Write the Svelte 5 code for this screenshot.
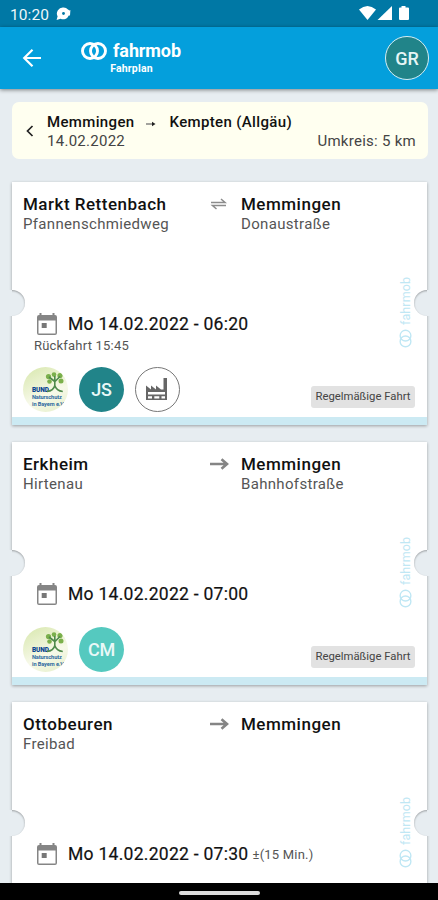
<script lang="ts">
  type Partner = { kind: 'bund' | 'person' | 'factory'; initials?: string; color?: string };
  type Ride = {
    from: string; fromStreet: string; to: string; toStreet?: string; both?: boolean;
    time: string; flex?: string; back?: string; partners?: Partner[];
  };

  const rides: Ride[] = [
    {
      from: 'Markt Rettenbach', fromStreet: 'Pfannenschmiedweg', to: 'Memmingen', toStreet: 'Donaustraße', both: true,
      time: 'Mo 14.02.2022 - 06:20', back: 'Rückfahrt 15:45',
      partners: [{ kind: 'bund' }, { kind: 'person', initials: 'JS', color: '#218489' }, { kind: 'factory' }],
    },
    {
      from: 'Erkheim', fromStreet: 'Hirtenau', to: 'Memmingen', toStreet: 'Bahnhofstraße',
      time: 'Mo 14.02.2022 - 07:00',
      partners: [{ kind: 'bund' }, { kind: 'person', initials: 'CM', color: '#55c9bf' }],
    },
    {
      from: 'Ottobeuren', fromStreet: 'Freibad', to: 'Memmingen',
      time: 'Mo 14.02.2022 - 07:30', flex: '±(15 Min.)',
    },
  ];
</script>

{#snippet rings(width: number)}
  <svg class="rings" viewBox="0 0 26 18" fill="none" stroke="currentColor" stroke-width={width}>
    <circle cx="9" cy="9" r="7.5" />
    <circle cx="17" cy="9" r="7.5" />
  </svg>
{/snippet}

<div class="phone">
  <div class="status">
    <span class="clock">10:20</span>
    <svg class="notif" width="16" height="14" viewBox="0 0 16 14">
      <path fill="#fff" d="M7.500.5a6 6 0 0 1 4.500 1.900l1.500 1.200.9-.6-.4 5.500-1.200.1A6 6 0 0 1 4.600 11.700L.6 13l1-3.700A6 6 0 0 1 7.500.5z" />
      <circle cx="7.500" cy="6.500" r="1.400" fill="#0078a5" />
    </svg>
    <svg class="signals" width="52" height="17" viewBox="0 0 52 17" fill="#fff">
      <path d="M0 4.500Q8.500-2.500 17 4.500L8.500 15z" />
      <path d="M33 1v14H18.500z" />
      <path d="M42.500 1h4v1.500H49a1 1 0 0 1 1 1V14a1 1 0 0 1-1 1h-8a1 1 0 0 1-1-1V3.500a1 1 0 0 1 1-1h1.500z" />
    </svg>
  </div>

  <header class="bar">
    <svg class="back" width="20" height="20" viewBox="0 0 20 20" fill="none" stroke="#fff" stroke-width="2.200">
      <path d="M19 10H3M10.500 1.700L2.200 10l8.300 8.300" />
    </svg>
    <div class="brand">
      <div class="logo">{@render rings(2.9)}<span>fahrmob</span></div>
      <div class="title">Fahrplan</div>
    </div>
    <div class="me">GR</div>
  </header>

  <main>
    <section class="search">
      <svg class="chev" width="8" height="12" viewBox="0 0 8 12" fill="none" stroke="#222" stroke-width="1.700"><path d="M6.500 1L1.500 6l5 5" /></svg>
      <div class="info">
        <div class="route">
          <span>Memmingen</span>
          <svg width="12" height="6" viewBox="0 0 12 6"><path d="M1 3h7" stroke="#666" stroke-width="1.200" /><path d="M7 .8L10.500 3 7 5.200z" fill="#222" /></svg>
          <span>Kempten (Allgäu)</span>
        </div>
        <div class="meta"><span class="date">14.02.2022</span><span class="radius">Umkreis: 5 km</span></div>
      </div>
    </section>

    {#each rides as r (r.from)}
      <article class="card">
        <i class="notch left"></i>
        <i class="notch right"></i>
        <div class="mark">{@render rings(1.9)}<span>fahrmob</span></div>
        <div class="stops">
          <div><b>{r.from}</b><small>{r.fromStreet}</small></div>
          <div class="dir">
            {#if r.both}
              <svg width="18" height="12" viewBox="0 0 18 12" fill="none" stroke="#8b8b8b" stroke-width="1.500"><path d="M1 4.400h14L11 1M16 7.600H2.500l4 3.400" /></svg>
            {:else}
              <svg width="19" height="12" viewBox="0 0 19 12" fill="none" stroke="#858585" stroke-width="2.600"><path d="M0 6h17M11.500 1.200L17 6l-5.500 4.800" /></svg>
            {/if}
          </div>
          <div><b>{r.to}</b><small>{r.toStreet ?? ''}</small></div>
        </div>
        <div class="when" class:raised={r.back}>
          <div class="line">
            <svg width="20" height="22" viewBox="0 0 20 22">
              <path fill="#858585" fill-rule="evenodd" d="M2.500 0h2v2h11V0h2v2h.5a2 2 0 0 1 2 2v16a2 2 0 0 1-2 2H2a2 2 0 0 1-2-2V4a2 2 0 0 1 2-2h.5zM1.500 7.500v13h17v-13z" />
              <path fill="#777" d="M4.700 10h5v5h-5z" />
            </svg>
            <span class="time">{r.time}</span>
            {#if r.flex}<span class="flex">{r.flex}</span>{/if}
          </div>
          {#if r.back}<div class="return">{r.back}</div>{/if}
        </div>
        {#if r.partners}
          <div class="foot">
            {#each r.partners as p}
              {#if p.kind === 'bund'}
                <div class="avatar bund">
                  <svg class="tree" width="20" height="21" viewBox="0 0 20 21">
                    <g fill="#7bb04c">
                      <circle cx="3.500" cy="4.500" r="2.600" /><circle cx="9" cy="2.600" r="2.300" /><circle cx="15" cy="3.500" r="2.600" />
                      <circle cx="4.500" cy="9.500" r="2.300" /><circle cx="16" cy="9" r="2.500" />
                    </g>
                    <path d="M9.800 4v10M9.800 9.500L4 5M10 9.500l5-5M2 19.500c4.500-.5 7-2.500 7.800-6 1 3.500 3 5.500 8 6" fill="none" stroke="#4f8a4c" stroke-width="1.600" />
                  </svg>
                  <strong>BUND</strong>
                  <span>Naturschutz</span>
                  <span>in Bayern e.V.</span>
                </div>
              {:else if p.kind === 'person'}
                <div class="avatar" style:background={p.color}>{p.initials}</div>
              {:else}
                <div class="avatar factory">
                  <svg width="24" height="24" viewBox="0 0 24 24">
                    <path fill="#666" fill-rule="evenodd" d="M1 23V8.500l5 4v-4l5 4v-4l5 4h2.500V1H22v22zM3 15v2.600h17V15zM3 19.300v2.200h4v-2.200zM9.300 19.300v2.200h5v-2.200zM16.500 19.300v2.200H20v-2.200z" />
                  </svg>
                </div>
              {/if}
            {/each}
            <span class="tag">Regelmäßige Fahrt</span>
          </div>
        {/if}
      </article>
    {/each}
  </main>

  <nav class="home"><span></span></nav>
</div>

<style>
  :global(body) { background: #e7edf1; }
  .phone { height: 900px; display: flex; flex-direction: column; overflow: hidden; background: #e7edf1; font-family: Roboto, "Liberation Sans", sans-serif; color: #111; }
  .status { flex: none; height: 27px; background: #0078a5; display: flex; align-items: center; padding: 0 27px 0 10px; }
  .clock { color: #eef7fa; font-size: 15.5px; letter-spacing: 0.1px; padding-top: 2px; }
  .notif { margin-left: 7px; }
  .signals { margin-left: auto; }

  .bar { flex: none; position: relative; z-index: 2; height: 62px; box-sizing: border-box; padding: 0 9px 0 22px; background: #049fdc; display: flex; align-items: center; box-shadow: 0 1px 4px #0007; }
  .brand { margin: 0 0 0 39px; width: 101px; color: #fff; }
  .logo { display: flex; align-items: center; height: 21px; font: bold 18px/21px Roboto, sans-serif; letter-spacing: -0.1px; }
  .logo .rings { width: 26px; height: 18px; margin-right: 6px; flex: none; }
  .title { padding-top: 1px; font-size: 10.5px; line-height: 14px; font-weight: bold; letter-spacing: 0.2px; text-align: center; }
  .me { margin-left: auto; width: 42px; height: 42px; border: 1.5px solid #d5eef4; border-radius: 50%; background: #218489; color: #e6f5f5; display: grid; place-items: center; font-size: 18px; font-weight: 500; }

  main { flex: 1; min-height: 0; overflow: hidden; padding: 13px 11px 0 12px; }
  .search { height: 57px; box-sizing: border-box; margin-right: -1px; border-radius: 7px; background: #fffff0; display: flex; align-items: center; padding: 2px 12px 0 14px; }
  .chev { flex: none; margin-top: -1px; }
  .info { flex: 1; margin-left: 13px; }
  .route { display: flex; align-items: center; font-size: 15px; line-height: 19px; font-weight: 500; letter-spacing: 0.35px; }
  .route svg { margin: 3px 13px 0 10px; }
  .meta { display: flex; justify-content: space-between; font-size: 15px; line-height: 19px; letter-spacing: 0.27px; color: #444; }

  .card { position: relative; height: 243px; box-sizing: border-box; margin-top: 23px; background: #fff; border-bottom: 8px solid #cceaf3; box-shadow: 0 1px 3px #0005; }
  .card + .card { margin-top: 17px; }
  .notch { position: absolute; top: 108px; width: 16px; height: 27px; overflow: hidden; }
  .notch::before { content: ''; position: absolute; z-index: 1; top: 0; width: 3px; height: 26px; background: #e7edf1; }
  .notch::after { content: ''; position: absolute; top: 0; width: 26px; height: 26px; box-sizing: border-box; border-radius: 50%; background: #e7edf1; box-shadow: inset 0 1px 2px #0005; }
  .left { left: -3px; }
  .left::before { left: 0; }
  .left::after { right: 0; }
  .right { right: -3px; }
  .right::before { right: 0; }
  .right::after { left: 0; }
  .mark { position: absolute; right: 14px; top: 95px; height: 71px; writing-mode: vertical-rl; transform: rotate(180deg); display: flex; align-items: center; color: #bfe7f4; font-size: 12.5px; line-height: 14px; }
  .mark .rings { width: 19px; height: 13px; transform: rotate(90deg); margin: 3px -3px; }
  .mark span { margin-top: 4px; letter-spacing: 0.1px; }

  .stops { display: grid; grid-template-columns: 197px 22px 1fr; padding: 12px 0 0 11px; }
  b { display: block; font-size: 17px; line-height: 20px; font-weight: 500; letter-spacing: 0.5px; color: #111; }
  .stops > div:last-child { margin-left: -1px; }
  small { display: block; font-size: 15px; line-height: 20px; letter-spacing: 0.33px; color: #555; }
  .dir { margin-left: -10px; padding-top: 4px; line-height: 0; }
  .when { position: absolute; left: 25px; top: 141px; }
  .raised { top: 131px; }
  .line { display: flex; align-items: center; height: 22px; }
  .time { margin-left: 11px; font-size: 17.5px; letter-spacing: 0.28px; color: #111; -webkit-text-stroke: 0.2px #111; }
  .flex { margin-left: 4px; font-size: 13px; letter-spacing: 0.2px; color: #555; }
  .return { margin-left: -3px; font-size: 13px; line-height: 21px; letter-spacing: 0.2px; color: #555; }

  .foot { position: absolute; left: 11px; right: 12px; bottom: 5px; height: 45px; display: flex; align-items: center; gap: 11px; }
  .avatar { position: relative; width: 45px; height: 45px; box-sizing: border-box; border-radius: 50%; display: grid; place-items: center; color: #e9f8f7; font-size: 18px; font-weight: 500; letter-spacing: -0.3px; }
  .bund { overflow: hidden; display: block; background: linear-gradient(155deg, #d7e7ac, #f7f9e9 60%, #e5efc9); color: #2c68a0; padding: 20px 0 0 6px; font-size: 5.6px; font-weight: bold; line-height: 7px; letter-spacing: -0.1px; white-space: nowrap; }
  .bund strong, .bund span { display: block; width: 33px; line-height: 7px; transform-origin: left; }
  .bund strong { font-size: 6.500px; font-weight: 900; color: #0b4590; }
  .tree { position: absolute; left: 22px; top: 5px; }
  .factory { border: 1px solid #777; }
  .factory svg { margin: -2px 0 0 -1px; }
  .tag { margin-left: auto; align-self: flex-end; margin-bottom: 4px; width: 104px; height: 22px; border-radius: 3px; background: #e2e2e2; color: #444; text-align: center; font-size: 11.3px; line-height: 22px; }

  .home { flex: none; height: 17px; background: #000; display: flex; justify-content: center; align-items: center; }
  .home span { width: 81px; height: 4px; margin-top: 2px; border-radius: 2px; background: #ddd; }
</style>
